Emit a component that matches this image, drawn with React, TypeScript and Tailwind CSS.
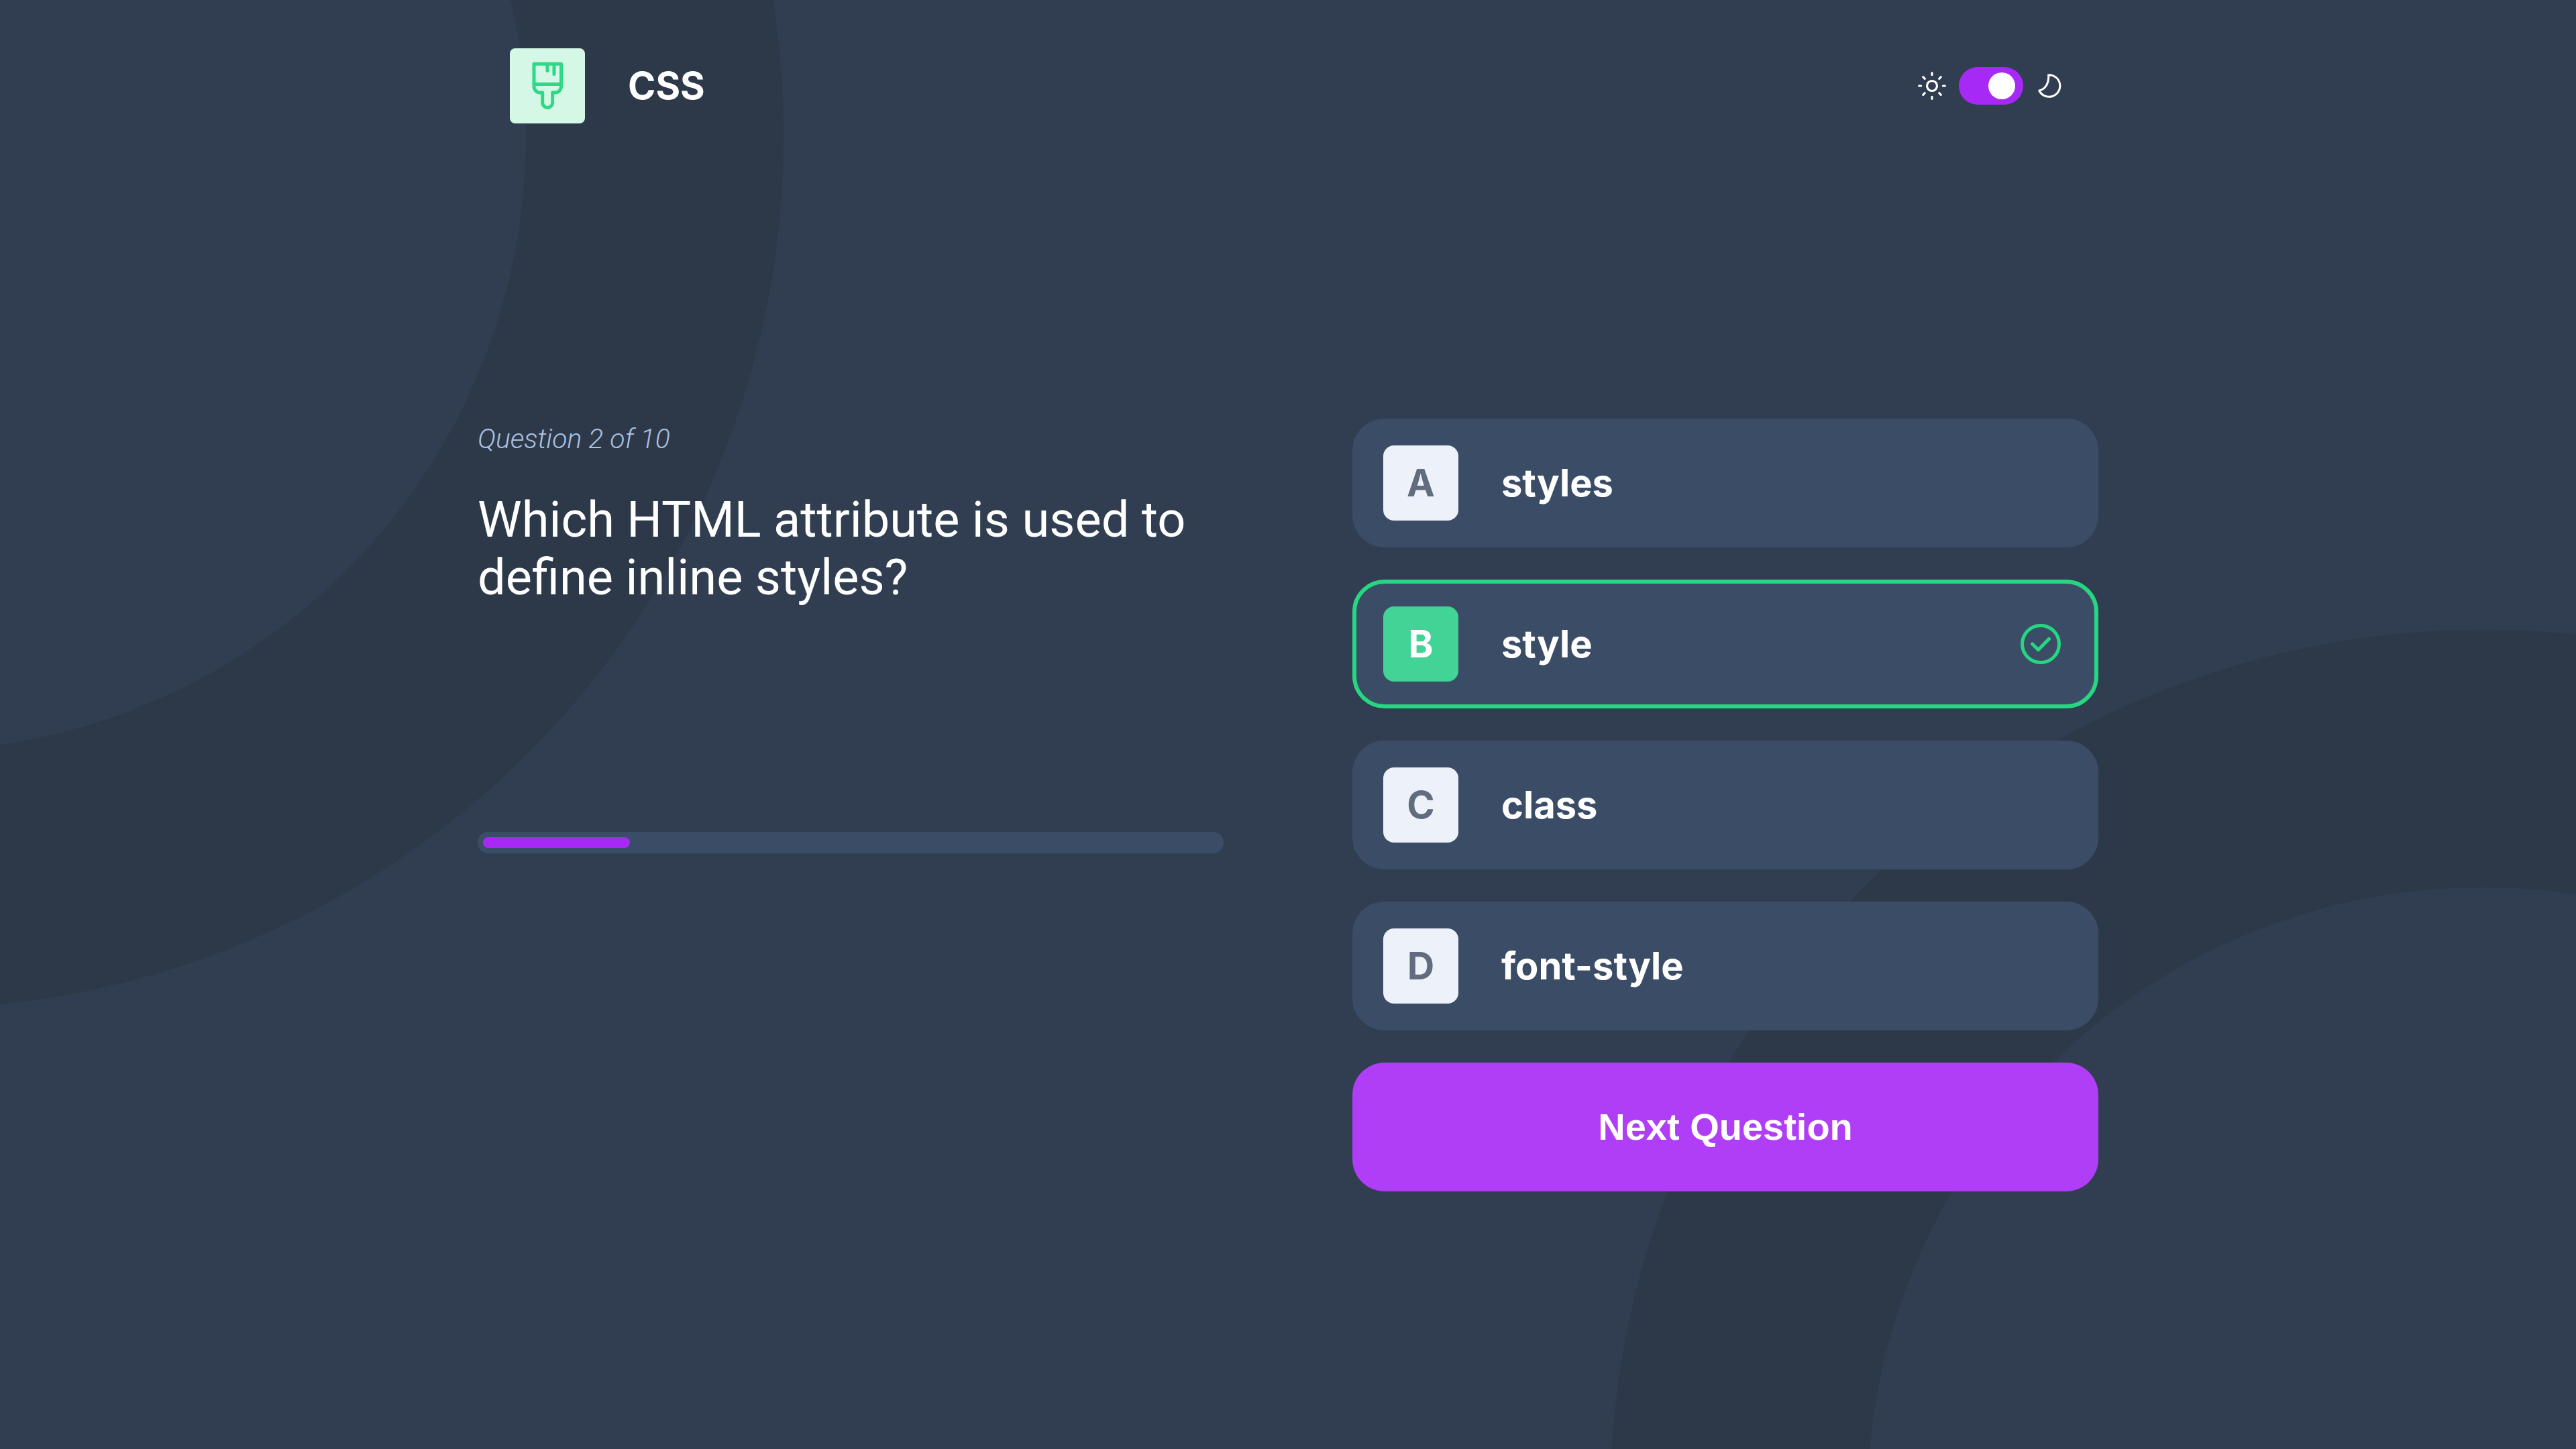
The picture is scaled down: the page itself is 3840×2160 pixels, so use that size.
import { useState } from 'react';

const options = [
  { letter: 'A', text: 'styles' },
  { letter: 'B', text: 'style', correct: true },
  { letter: 'C', text: 'class' },
  { letter: 'D', text: 'font-style' },
];

function Backdrop() {
  return (
    <svg
      aria-hidden="true"
      viewBox="0 0 1440 960"
      preserveAspectRatio="xMidYMid slice"
      fill="none"
      stroke="#2d3949"
      strokeWidth="144"
      className="absolute inset-0 -z-10 h-full w-full"
    >
      <circle cx="-50" cy="151" r="416" />
      <circle cx="1388" cy="915" r="416" />
    </svg>
  );
}

function BrushIcon() {
  return (
    <svg
      aria-hidden="true"
      viewBox="0 0 112 112"
      fill="none"
      stroke="#2fd887"
      strokeWidth="5"
      strokeLinecap="round"
      strokeLinejoin="round"
      className="size-28"
    >
      <path d="M36 23.3H76.5V57a9 9 0 0 1-9 9H63.7V81a7.5 7.5 0 0 1-15 0V66H45a9 9 0 0 1-9-9Z" />
      <path d="M36 53.5H76.5M56 23.5V33.5M66 23.5V38.5" />
    </svg>
  );
}

function SunIcon() {
  return (
    <svg
      aria-hidden="true"
      viewBox="0 0 48 48"
      fill="none"
      stroke="#fff"
      strokeWidth="3.2"
      strokeLinecap="round"
      className="size-12"
    >
      <circle cx="24" cy="24" r="7.5" />
      <path d="M24 4.7V7.6M24 40.4V43.3M4.7 24H7.6M40.4 24H43.3M10.7 10.7L13.3 13.3M34.7 34.7L37.3 37.3M10.7 37.3L13.3 34.7M34.7 13.3L37.3 10.7" />
    </svg>
  );
}

function MoonIcon() {
  return (
    <svg
      aria-hidden="true"
      viewBox="0 0 48 48"
      fill="none"
      stroke="#fff"
      strokeWidth="3"
      strokeLinejoin="round"
      className="size-12"
    >
      <path d="M21.6 7.7A16.3 16.3 0 1 1 7.8 31C17 29 22.6 20 21.6 7.7Z" />
    </svg>
  );
}

function CorrectIcon() {
  return (
    <svg
      role="img"
      aria-label="Correct answer"
      viewBox="0 0 40 40"
      fill="none"
      stroke="#26d782"
      strokeWidth="2.5"
      strokeLinecap="round"
      strokeLinejoin="round"
      className="ml-auto size-20"
    >
      <circle cx="20" cy="20" r="13.75" />
      <path d="M13.8 20L18.2 24.4L26.2 16.2" />
    </svg>
  );
}

export default function App() {
  const [dark, setDark] = useState(true);

  return (
    <div className='relative isolate min-h-screen overflow-hidden bg-[#313e51] font-["Inter",sans-serif] text-white'>
      <Backdrop />
      <div className="mx-auto w-full max-w-[2416px]">
        <header className="flex items-center justify-between px-12 py-18">
          <div className="flex items-center gap-16">
            <div className="overflow-hidden rounded-lg bg-[#d5f7e5]">
              <BrushIcon />
            </div>
            <h1 className="text-[56px] leading-none font-bold">CSS</h1>
          </div>
          <div className="flex items-center gap-4">
            <SunIcon />
            <input
              type="checkbox"
              role="switch"
              aria-label="Dark mode"
              checked={dark}
              onChange={(e) => setDark(e.target.checked)}
              className="flex h-14 w-24 cursor-pointer appearance-none items-center rounded-full bg-[#a729f5] px-3 before:size-10 before:rounded-full before:bg-white before:content-[''] checked:justify-end"
            />
            <MoonIcon />
          </div>
        </header>

        <main className="mt-[368px] grid grid-cols-2 gap-48 pb-48">
          <section className='font-["Roboto",sans-serif]'>
            <p className="text-[41px] leading-[60px] font-light text-[#abc1e1] italic">Question 2 of 10</p>
            <h2 className="mt-12 min-h-[508px] text-[74px] leading-[86px] font-normal">
              Which HTML attribute is used to define inline styles?
            </h2>
            <div
              role="progressbar"
              aria-label="Quiz progress"
              aria-valuenow={2}
              aria-valuemin={0}
              aria-valuemax={10}
              className="h-8 rounded-full bg-[#3b4d66] p-2"
            >
              <div className="h-4 w-1/5 rounded-full bg-[#a729f5]" />
            </div>
          </section>

          <section className="flex flex-col gap-12">
            {options.map(({ letter, text, correct }) => (
              <button
                key={letter}
                type="button"
                className={
                  correct
                    ? 'flex h-48 items-center gap-16 rounded-[48px] border-6 border-[#26d782] bg-[#3b4d66] px-10 text-[56px] font-bold'
                    : 'flex h-48 items-center gap-16 rounded-[48px] border-6 border-[#3b4d66] bg-[#3b4d66] px-10 text-[56px] font-bold'
                }
              >
                <span
                  className={
                    correct
                      ? 'flex size-28 items-center justify-center rounded-2xl bg-[#42d396] text-white'
                      : 'flex size-28 items-center justify-center rounded-2xl bg-[#edf2fa] text-[#626c7f]'
                  }
                >
                  {letter}
                </span>
                <span>{text}</span>
                {correct && <CorrectIcon />}
              </button>
            ))}
            <button
              type="button"
              className='h-48 rounded-[48px] bg-[#af3ef6] font-["Liberation_Sans",sans-serif] text-[56px] font-bold'
            >
              Next Question
            </button>
          </section>
        </main>
      </div>
    </div>
  );
}
